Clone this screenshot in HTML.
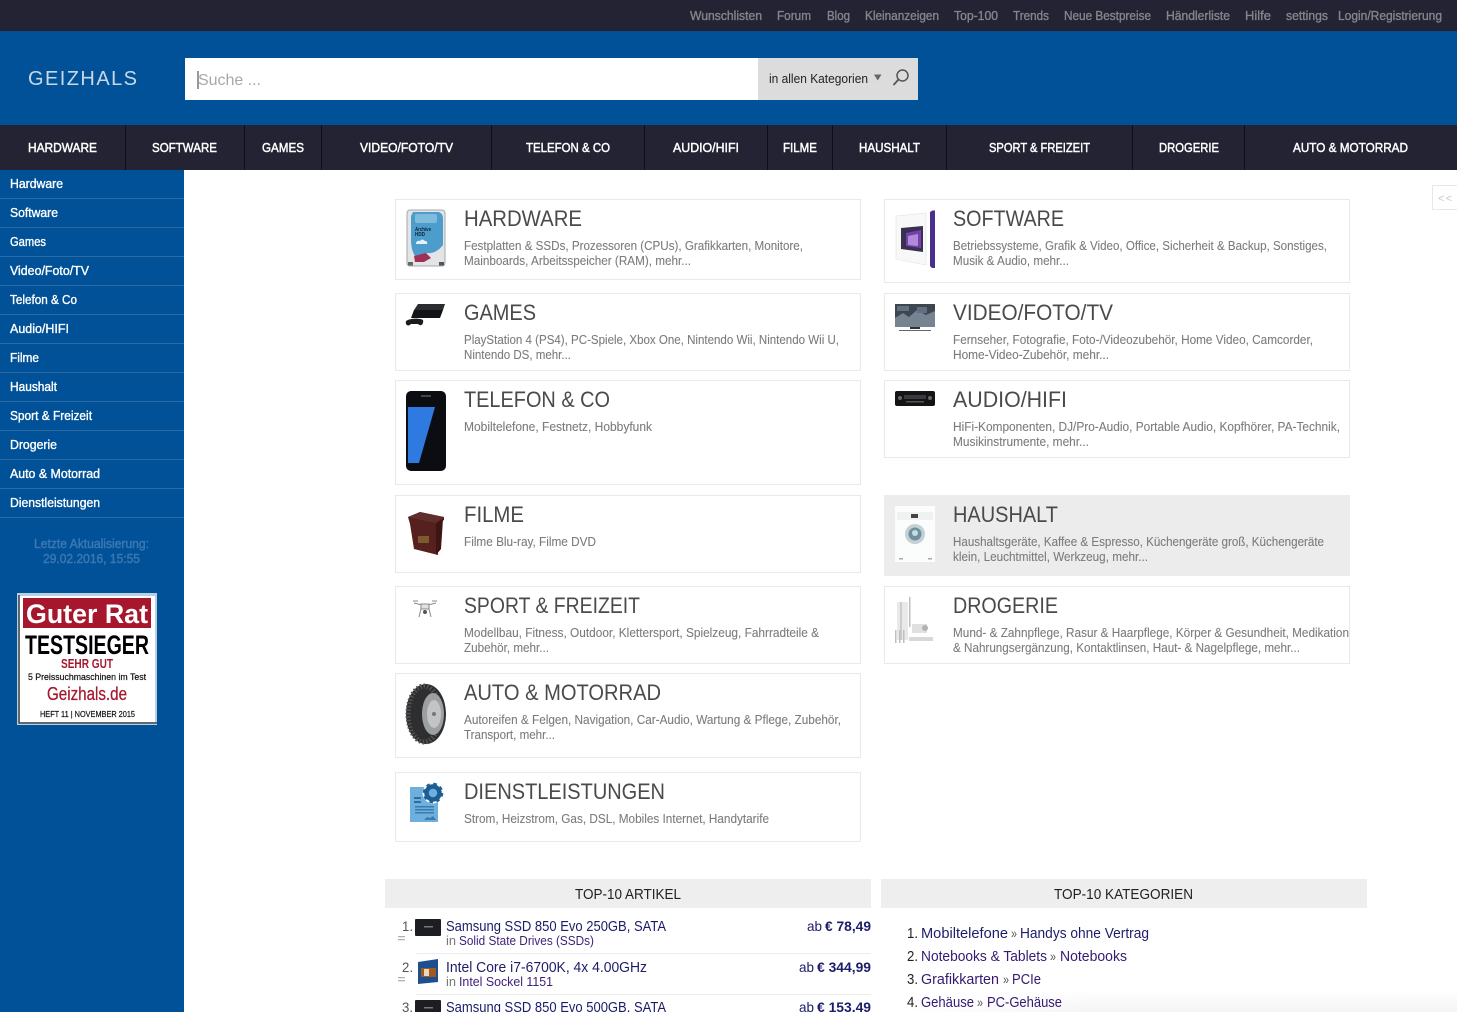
<!DOCTYPE html>
<html lang="de"><head><meta charset="utf-8"><title>Geizhals</title>
<style>
html,body{margin:0;padding:0;background:#fff;width:1457px;height:1012px;overflow:hidden;font-family:"Liberation Sans",sans-serif}
.b{position:absolute;box-sizing:border-box}
.c{border:1px solid #e9e9e9;background:#fff}
svg{position:absolute;left:0;top:0}
text{font-family:"Liberation Sans",sans-serif}
.top{font-size:12.5px;fill:#85858d;stroke:#85858d;stroke-width:.35}
.nav{font-size:13px;fill:#fff;stroke:#fff;stroke-width:.45}
.sd{font-size:12.5px;fill:#fff;stroke:#fff;stroke-width:.35}
.t{font-size:22px;fill:#4a4a4a}
.d{font-size:12.5px;fill:#7c7c7c;stroke:#7c7c7c;stroke-width:.1}
.l{font-size:14.5px;fill:#1c1c6b}
.s{font-size:12.5px;fill:#3d1f7a}
.g{font-size:12.5px;fill:#777}
.p{font-size:14px;fill:#1c1c6b}
.pb{font-size:14px;font-weight:bold;fill:#1c1c6b}
.n{font-size:14px;fill:#555}
.n2{font-size:14.5px;fill:#222}
.h{font-size:14.5px;fill:#222}
</style></head><body>
<div class="b" style="left:0;top:0;width:1457px;height:31px;background:#232333"></div>
<div class="b" style="left:0;top:31px;width:1457px;height:94px;background:#005197"></div>
<div class="b" style="left:0;top:125px;width:1457px;height:45px;background:#232333"></div>
<div class="b" style="left:0;top:170px;width:184px;height:842px;background:#005197"></div>
<div class="b" style="left:185px;top:58px;width:573px;height:42px;background:#fff"></div>
<div class="b" style="left:758px;top:58px;width:160px;height:42px;background:#dcdcdc"></div>

<div class="b c" style="left:395px;top:199px;width:466px;height:81px"></div>
<div class="b c" style="left:395px;top:293px;width:466px;height:78px"></div>
<div class="b c" style="left:395px;top:380px;width:466px;height:105px"></div>
<div class="b c" style="left:395px;top:495px;width:466px;height:78px"></div>
<div class="b c" style="left:395px;top:586px;width:466px;height:78px"></div>
<div class="b c" style="left:395px;top:673px;width:466px;height:85px"></div>
<div class="b c" style="left:395px;top:772px;width:466px;height:70px"></div>
<div class="b c" style="left:884px;top:199px;width:466px;height:84px"></div>
<div class="b c" style="left:884px;top:293px;width:466px;height:78px"></div>
<div class="b c" style="left:884px;top:380px;width:466px;height:78px"></div>
<div class="b" style="left:884px;top:495px;width:466px;height:81px;background:#ececec"></div>
<div class="b c" style="left:884px;top:586px;width:466px;height:78px"></div>

<div class="b" style="left:385px;top:879px;width:486px;height:29px;background:#eee"></div>
<div class="b" style="left:881px;top:879px;width:486px;height:29px;background:#eee"></div>
<div class="b" style="left:1432px;top:185px;width:25px;height:25px;border:1px solid #e8e8e8;border-right:0;background:#fff"></div>
<div class="b" style="left:900px;top:990px;width:557px;height:22px;background:linear-gradient(to bottom,rgba(243,243,243,0),rgba(243,243,243,.9));-webkit-mask-image:linear-gradient(to right,transparent,#000 35%);mask-image:linear-gradient(to right,transparent,#000 35%)"></div>

<svg width="1457" height="1012" viewBox="0 0 1457 1012" xmlns="http://www.w3.org/2000/svg">
<!-- top links -->
<g class="top">
<text x="690" y="20" textLength="72" lengthAdjust="spacingAndGlyphs">Wunschlisten</text>
<text x="777" y="20" textLength="34" lengthAdjust="spacingAndGlyphs">Forum</text>
<text x="827" y="20" textLength="23" lengthAdjust="spacingAndGlyphs">Blog</text>
<text x="865" y="20" textLength="74" lengthAdjust="spacingAndGlyphs">Kleinanzeigen</text>
<text x="954" y="20" textLength="44" lengthAdjust="spacingAndGlyphs">Top-100</text>
<text x="1013" y="20" textLength="36" lengthAdjust="spacingAndGlyphs">Trends</text>
<text x="1064" y="20" textLength="87" lengthAdjust="spacingAndGlyphs">Neue Bestpreise</text>
<text x="1166" y="20" textLength="64" lengthAdjust="spacingAndGlyphs">Händlerliste</text>
<text x="1245" y="20" textLength="26" lengthAdjust="spacingAndGlyphs">Hilfe</text>
<text x="1286" y="20" textLength="42" lengthAdjust="spacingAndGlyphs">settings</text>
<text x="1338" y="20" textLength="104" lengthAdjust="spacingAndGlyphs">Login/Registrierung</text>
</g>
<!-- logo & search -->
<text x="28" y="85" font-size="20" fill="#c9d8e7" textLength="109" lengthAdjust="spacing">GEIZHALS</text>
<text x="198" y="85" font-size="16" fill="#a8a8a8" textLength="63" lengthAdjust="spacing">Suche ...</text>
<rect x="197.500" y="71" width="1" height="18" fill="#333"/>
<text x="769" y="83" font-size="12.500" fill="#222" textLength="99" lengthAdjust="spacingAndGlyphs">in allen Kategorien</text>
<path d="M874 74.500h7.500l-3.750 6z" fill="#666"/>
<circle cx="902.500" cy="75.500" r="5.500" fill="none" stroke="#555" stroke-width="1.500"/>
<path d="M898.500 79.500L893.500 85" stroke="#555" stroke-width="1.800" fill="none"/>
<!-- nav -->
<g fill="#0e0e18">
<rect x="125" y="125" width="1" height="45"/><rect x="244" y="125" width="1" height="45"/><rect x="321" y="125" width="1" height="45"/><rect x="491" y="125" width="1" height="45"/><rect x="644" y="125" width="1" height="45"/><rect x="767" y="125" width="1" height="45"/><rect x="832" y="125" width="1" height="45"/><rect x="946" y="125" width="1" height="45"/><rect x="1132" y="125" width="1" height="45"/><rect x="1244" y="125" width="1" height="45"/>
</g>
<g class="nav">
<text x="28" y="152" textLength="69" lengthAdjust="spacingAndGlyphs">HARDWARE</text>
<text x="152" y="152" textLength="65" lengthAdjust="spacingAndGlyphs">SOFTWARE</text>
<text x="262" y="152" textLength="42" lengthAdjust="spacingAndGlyphs">GAMES</text>
<text x="360" y="152" textLength="93" lengthAdjust="spacingAndGlyphs">VIDEO/FOTO/TV</text>
<text x="526" y="152" textLength="84" lengthAdjust="spacingAndGlyphs">TELEFON &amp; CO</text>
<text x="673" y="152" textLength="66" lengthAdjust="spacingAndGlyphs">AUDIO/HIFI</text>
<text x="783" y="152" textLength="34" lengthAdjust="spacingAndGlyphs">FILME</text>
<text x="859" y="152" textLength="61" lengthAdjust="spacingAndGlyphs">HAUSHALT</text>
<text x="989" y="152" textLength="101" lengthAdjust="spacingAndGlyphs">SPORT &amp; FREIZEIT</text>
<text x="1159" y="152" textLength="60" lengthAdjust="spacingAndGlyphs">DROGERIE</text>
<text x="1293" y="152" textLength="115" lengthAdjust="spacingAndGlyphs">AUTO &amp; MOTORRAD</text>
</g>
<!-- sidebar -->
<g fill="#2a6ba6">
<rect y="198" width="184" height="1"/><rect y="227" width="184" height="1"/><rect y="256" width="184" height="1"/><rect y="285" width="184" height="1"/><rect y="314" width="184" height="1"/><rect y="343" width="184" height="1"/><rect y="372" width="184" height="1"/><rect y="401" width="184" height="1"/><rect y="430" width="184" height="1"/><rect y="459" width="184" height="1"/><rect y="488" width="184" height="1"/><rect y="517" width="184" height="1"/>
</g>
<g class="sd">
<text x="10" y="188" textLength="53" lengthAdjust="spacingAndGlyphs">Hardware</text>
<text x="10" y="217" textLength="48" lengthAdjust="spacingAndGlyphs">Software</text>
<text x="10" y="246" textLength="36" lengthAdjust="spacingAndGlyphs">Games</text>
<text x="10" y="275" textLength="79" lengthAdjust="spacingAndGlyphs">Video/Foto/TV</text>
<text x="10" y="304" textLength="67" lengthAdjust="spacingAndGlyphs">Telefon &amp; Co</text>
<text x="10" y="333" textLength="59" lengthAdjust="spacingAndGlyphs">Audio/HIFI</text>
<text x="10" y="362" textLength="29" lengthAdjust="spacingAndGlyphs">Filme</text>
<text x="10" y="391" textLength="47" lengthAdjust="spacingAndGlyphs">Haushalt</text>
<text x="10" y="420" textLength="82" lengthAdjust="spacingAndGlyphs">Sport &amp; Freizeit</text>
<text x="10" y="449" textLength="47" lengthAdjust="spacingAndGlyphs">Drogerie</text>
<text x="10" y="478" textLength="90" lengthAdjust="spacingAndGlyphs">Auto &amp; Motorrad</text>
<text x="10" y="507" textLength="90" lengthAdjust="spacingAndGlyphs">Dienstleistungen</text>
</g>
<g font-size="12.500" fill="#3a78b2" stroke="#3a78b2" stroke-width=".45">
<text x="34" y="548" textLength="115" lengthAdjust="spacingAndGlyphs">Letzte Aktualisierung:</text>
<text x="43" y="563" textLength="97" lengthAdjust="spacingAndGlyphs">29.02.2016, 15:55</text>
</g>
<!-- badge -->
<rect x="17" y="593" width="140" height="132" fill="#b9d0e0"/>
<path d="M19 595V723H157" fill="none" stroke="#444" stroke-width="1.500"/>
<rect x="20" y="596" width="135" height="126" fill="#fff"/>
<rect x="23" y="598" width="128" height="30" fill="#a6172d"/>
<text x="26" y="623" font-size="27" font-weight="bold" fill="#fff" textLength="122" lengthAdjust="spacingAndGlyphs">Guter Rat</text>
<text x="25" y="654" font-size="27" font-weight="bold" fill="#000" textLength="124" lengthAdjust="spacingAndGlyphs">TESTSIEGER</text>
<text x="61" y="668" font-size="13" font-weight="bold" fill="#a6172d" textLength="52" lengthAdjust="spacingAndGlyphs">SEHR GUT</text>
<text x="28" y="680" font-size="9" fill="#111" stroke="#111" stroke-width=".2" textLength="118" lengthAdjust="spacingAndGlyphs">5 Preissuchmaschinen im Test</text>
<text x="47" y="700" font-size="18" fill="#a6172d" stroke="#a6172d" stroke-width=".25" textLength="80" lengthAdjust="spacingAndGlyphs">Geizhals.de</text>
<text x="40" y="717" font-size="8.500" fill="#111" stroke="#111" stroke-width=".2" textLength="95" lengthAdjust="spacingAndGlyphs">HEFT 11 | NOVEMBER 2015</text>

<!-- card text left -->
<text class="t" x="464" y="226" textLength="118" lengthAdjust="spacingAndGlyphs">HARDWARE</text>
<text class="d" x="464" y="250" textLength="339" lengthAdjust="spacingAndGlyphs">Festplatten &amp; SSDs, Prozessoren (CPUs), Grafikkarten, Monitore,</text>
<text class="d" x="464" y="265" textLength="227" lengthAdjust="spacingAndGlyphs">Mainboards, Arbeitsspeicher (RAM), mehr...</text>
<text class="t" x="464" y="320" textLength="72" lengthAdjust="spacingAndGlyphs">GAMES</text>
<text class="d" x="464" y="344" textLength="375" lengthAdjust="spacingAndGlyphs">PlayStation 4 (PS4), PC-Spiele, Xbox One, Nintendo Wii, Nintendo Wii U,</text>
<text class="d" x="464" y="359" textLength="107" lengthAdjust="spacingAndGlyphs">Nintendo DS, mehr...</text>
<text class="t" x="464" y="407" textLength="146" lengthAdjust="spacingAndGlyphs">TELEFON &amp; CO</text>
<text class="d" x="464" y="431" textLength="188" lengthAdjust="spacingAndGlyphs">Mobiltelefone, Festnetz, Hobbyfunk</text>
<text class="t" x="464" y="522" textLength="60" lengthAdjust="spacingAndGlyphs">FILME</text>
<text class="d" x="464" y="546" textLength="132" lengthAdjust="spacingAndGlyphs">Filme Blu-ray, Filme DVD</text>
<text class="t" x="464" y="613" textLength="176" lengthAdjust="spacingAndGlyphs">SPORT &amp; FREIZEIT</text>
<text class="d" x="464" y="637" textLength="355" lengthAdjust="spacingAndGlyphs">Modellbau, Fitness, Outdoor, Klettersport, Spielzeug, Fahrradteile &amp;</text>
<text class="d" x="464" y="652" textLength="85" lengthAdjust="spacingAndGlyphs">Zubehör, mehr...</text>
<text class="t" x="464" y="700" textLength="197" lengthAdjust="spacingAndGlyphs">AUTO &amp; MOTORRAD</text>
<text class="d" x="464" y="724" textLength="377" lengthAdjust="spacingAndGlyphs">Autoreifen &amp; Felgen, Navigation, Car-Audio, Wartung &amp; Pflege, Zubehör,</text>
<text class="d" x="464" y="739" textLength="91" lengthAdjust="spacingAndGlyphs">Transport, mehr...</text>
<text class="t" x="464" y="799" textLength="201" lengthAdjust="spacingAndGlyphs">DIENSTLEISTUNGEN</text>
<text class="d" x="464" y="823" textLength="305" lengthAdjust="spacingAndGlyphs">Strom, Heizstrom, Gas, DSL, Mobiles Internet, Handytarife</text>
<!-- card text right -->
<text class="t" x="953" y="226" textLength="111" lengthAdjust="spacingAndGlyphs">SOFTWARE</text>
<text class="d" x="953" y="250" textLength="374" lengthAdjust="spacingAndGlyphs">Betriebssysteme, Grafik &amp; Video, Office, Sicherheit &amp; Backup, Sonstiges,</text>
<text class="d" x="953" y="265" textLength="116" lengthAdjust="spacingAndGlyphs">Musik &amp; Audio, mehr...</text>
<text class="t" x="953" y="320" textLength="160" lengthAdjust="spacingAndGlyphs">VIDEO/FOTO/TV</text>
<text class="d" x="953" y="344" textLength="360" lengthAdjust="spacingAndGlyphs">Fernseher, Fotografie, Foto-/Videozubehör, Home Video, Camcorder,</text>
<text class="d" x="953" y="359" textLength="156" lengthAdjust="spacingAndGlyphs">Home-Video-Zubehör, mehr...</text>
<text class="t" x="953" y="407" textLength="114" lengthAdjust="spacingAndGlyphs">AUDIO/HIFI</text>
<text class="d" x="953" y="431" textLength="387" lengthAdjust="spacingAndGlyphs">HiFi-Komponenten, DJ/Pro-Audio, Portable Audio, Kopfhörer, PA-Technik,</text>
<text class="d" x="953" y="446" textLength="136" lengthAdjust="spacingAndGlyphs">Musikinstrumente, mehr...</text>
<text class="t" x="953" y="522" textLength="105" lengthAdjust="spacingAndGlyphs">HAUSHALT</text>
<text class="d" x="953" y="546" textLength="371" lengthAdjust="spacingAndGlyphs">Haushaltsgeräte, Kaffee &amp; Espresso, Küchengeräte groß, Küchengeräte</text>
<text class="d" x="953" y="561" textLength="195" lengthAdjust="spacingAndGlyphs">klein, Leuchtmittel, Werkzeug, mehr...</text>
<text class="t" x="953" y="613" textLength="105" lengthAdjust="spacingAndGlyphs">DROGERIE</text>
<text class="d" x="953" y="637" textLength="396" lengthAdjust="spacingAndGlyphs">Mund- &amp; Zahnpflege, Rasur &amp; Haarpflege, Körper &amp; Gesundheit, Medikation</text>
<text class="d" x="953" y="652" textLength="347" lengthAdjust="spacingAndGlyphs">&amp; Nahrungsergänzung, Kontaktlinsen, Haut- &amp; Nagelpflege, mehr...</text>

<!-- collapse -->
<text x="1438" y="202" font-size="11" fill="#c8c8c8" textLength="14" lengthAdjust="spacing">&lt;&lt;</text>

<!-- HDD icon -->
<rect x="407" y="210" width="38" height="56" rx="3" fill="#e2e4e5" stroke="#a4a8ab" stroke-width="1"/>
<path d="M413 212H439Q443 214 443 218V245Q436 254 427 253L415 256Q411 250 411 240V216Z" fill="#4c9ccc"/>
<rect x="415" y="214" width="22" height="9" rx="2" fill="#7fbbdd"/>
<text x="415" y="231" font-size="5" font-weight="bold" fill="#123" textLength="16" lengthAdjust="spacingAndGlyphs">Archive</text>
<text x="415" y="236" font-size="5" font-weight="bold" fill="#123" textLength="10" lengthAdjust="spacingAndGlyphs">HDD</text>
<path d="M416 243q1-3 4-2q2-3 5 0q3 0 2 3h-11z" fill="#e6f2fa"/>
<path d="M414 256L426 253 431 258 424 262H415z" fill="#9e3058"/>
<rect x="408" y="262" width="5" height="3.500" fill="#666"/><rect x="439" y="262" width="5" height="3.500" fill="#555"/>
<!-- Win box -->
<path d="M896 216L926 213V265L896 259z" fill="#f8f8f9" stroke="#e2e2e2" stroke-width=".6"/>
<path d="M930 212L932.500 210.500H935V268H932L930 266z" fill="#4a2f8f"/>
<path d="M901 228L923 226V252L901 249z" fill="#38324f"/>
<path d="M906 233L921 230V248L906 246z" fill="#7a3eb3"/>
<path d="M908 236L918 234V246L908 245z" fill="#b18ad8"/>
<!-- PS4 -->
<path d="M418 304H445L443 310H414z" fill="#2a2c30"/>
<path d="M414 310H443L440 318H411z" fill="#121316"/>
<path d="M406 321C410 318 420 318 423 320C424 324 421 327 418 324H411C408 327 405 325 406 321z" fill="#1a1c1f"/>
<!-- Phone -->
<rect x="406" y="391" width="40" height="80" rx="5" fill="#0b0d12"/>
<path d="M408 407H435L419 463H408z" fill="#2f7ae0"/>
<rect x="421" y="395" width="10" height="2" fill="#444"/>
<!-- TV -->
<rect x="895" y="304" width="40" height="23" fill="#3e4650"/>
<path d="M895 318l8-5 6 4 8-7 9 5 9-4v16h-40z" fill="#768390"/>
<path d="M897 306h12v5h-12zM917 307h10v6h-10z" fill="#5f7182"/>
<path d="M910 327h10v2h-10zM899 330h32v.8h-32z" fill="#333"/>
<!-- Receiver -->
<rect x="895" y="391" width="40" height="15" rx="2" fill="#141416"/>
<rect x="904" y="395" width="22" height="4" fill="#3a3a3e"/>
<circle cx="900" cy="398" r="2" fill="#666"/><circle cx="930" cy="398" r="2" fill="#666"/>
<rect x="906" y="401" width="18" height="1.500" fill="#555"/>
<!-- Film box -->
<path d="M408 517L420 512 444 517V520L438 524V555L414 549L410 524z" fill="#55201d"/>
<path d="M408 517L420 512 444 517 436 523z" fill="#5f302b"/>
<path d="M436 523V555L441 549 443 519z" fill="#3d1512"/>
<path d="M418 536h11v7h-11z" fill="#8f7238" opacity=".7"/>
<!-- Drone -->
<g stroke="#8a8a8a" stroke-width="1" fill="none">
<path d="M414 603L422 605M436 603L428 605"/>
<path d="M413 601h5M432 601h5"/>
<rect x="421" y="604" width="8" height="5" fill="#e2e2e2"/>
<path d="M421 609L419 617M429 609L431 617"/>
</g>
<circle cx="425" cy="612" r="2" fill="#555"/>
<!-- Tire -->
<ellipse cx="426" cy="714" rx="20" ry="30" fill="#2e2e30"/>
<ellipse cx="424" cy="714" rx="16" ry="28" fill="none" stroke="#545456" stroke-width="5" stroke-dasharray="1.500 2"/>
<ellipse cx="433" cy="714" rx="11" ry="21" fill="#9da0a2"/>
<ellipse cx="434" cy="714" rx="7" ry="14" fill="#c2c4c5"/>
<circle cx="434" cy="714" r="2" fill="#777"/>
<!-- Dienst -->
<rect x="410" y="787" width="28" height="35" fill="#6db0de"/>
<rect x="414" y="797" width="7" height="2" fill="#2f6d9f"/><rect x="414" y="801" width="7" height="2" fill="#2f6d9f"/>
<rect x="415" y="806" width="19" height="1.500" fill="#3b7cad"/><rect x="415" y="809" width="19" height="1.500" fill="#3b7cad"/><rect x="415" y="812" width="19" height="1.500" fill="#3b7cad"/>
<path d="M424 820l3-3 3 1 3-2 3 4z" fill="#3b7cad"/>
<circle cx="433" cy="793" r="9" fill="none" stroke="#fff" stroke-width="3"/>
<circle cx="433" cy="793" r="6.500" fill="none" stroke="#1c5d94" stroke-width="4.500"/>
<circle cx="433" cy="793" r="9" fill="none" stroke="#1c5d94" stroke-width="2.500" stroke-dasharray="3.500 3.570"/>
<!-- Washer -->
<rect x="895" y="506" width="40" height="56" fill="#fbfdfd"/>
<rect x="897" y="512" width="36" height="8" fill="#f0f2f2"/>
<rect x="911" y="514" width="7" height="4" fill="#444"/>
<circle cx="915" cy="534" r="10" fill="#c5d1d5"/>
<circle cx="915" cy="534" r="6.500" fill="#6f919e"/>
<circle cx="915" cy="533" r="3" fill="#c8dbe2"/>
<rect x="899" y="558" width="4" height="1.500" fill="#aaa"/><rect x="928" y="558" width="4" height="1.500" fill="#aaa"/>
<!-- Drogerie -->
<g opacity=".75">
<rect x="897" y="602" width="11" height="38" fill="#e2e2e2"/>
<rect x="900" y="602" width="2" height="38" fill="#bcbcbc"/>
<rect x="909" y="597" width="1.500" height="30" fill="#aaa"/>
<rect x="912" y="624" width="15" height="9" fill="#d6d6d6"/>
<circle cx="925" cy="628" r="3" fill="#999"/>
<rect x="909" y="637" width="24" height="4" fill="#cbcbcb"/>
<rect x="895" y="630" width="1.500" height="13" fill="#aaa"/><rect x="899" y="630" width="1.500" height="13" fill="#aaa"/><rect x="903" y="630" width="1.500" height="13" fill="#aaa"/>
</g>

<!-- bottom headers -->
<text class="h" x="575" y="899" textLength="106" lengthAdjust="spacingAndGlyphs">TOP-10 ARTIKEL</text>
<text class="h" x="1054" y="899" textLength="139" lengthAdjust="spacingAndGlyphs">TOP-10 KATEGORIEN</text>
<!-- top articles -->
<text class="n" x="402" y="931" textLength="11" lengthAdjust="spacingAndGlyphs">1.</text>
<rect x="415" y="919" width="26" height="17" rx="1" fill="#1d1e21"/><rect x="424" y="926" width="9" height="1.500" fill="#777"/>
<path d="M398 936h7v1.300h-7zM398 939h7v1.300h-7z" fill="#b0b0b0"/>
<text class="l" x="446" y="931" textLength="220" lengthAdjust="spacingAndGlyphs">Samsung SSD 850 Evo 250GB, SATA</text>
<text class="g" x="446" y="945" textLength="10" lengthAdjust="spacingAndGlyphs">in</text>
<text class="s" x="459" y="945" textLength="135" lengthAdjust="spacingAndGlyphs">Solid State Drives (SSDs)</text>
<text class="p" x="807" y="931" textLength="15" lengthAdjust="spacingAndGlyphs">ab</text>
<text class="pb" x="825" y="931" textLength="46" lengthAdjust="spacingAndGlyphs">€ 78,49</text>
<rect x="416" y="953" width="455" height="1" fill="#ececec"/>
<text class="n" x="402" y="972" textLength="11" lengthAdjust="spacingAndGlyphs">2.</text>
<path d="M418 962L438 959V982L418 984z" fill="#1b4f8f"/>
<path d="M421 968h15v9h-15z" fill="#a3591f"/><path d="M424 969h5v7h-5z" fill="#e8d8c0"/>
<path d="M398 977h7v1.300h-7zM398 980h7v1.300h-7z" fill="#b0b0b0"/>
<text class="l" x="446" y="972" textLength="201" lengthAdjust="spacingAndGlyphs">Intel Core i7-6700K, 4x 4.00GHz</text>
<text class="g" x="446" y="986" textLength="10" lengthAdjust="spacingAndGlyphs">in</text>
<text class="s" x="459" y="986" textLength="94" lengthAdjust="spacingAndGlyphs">Intel Sockel 1151</text>
<text class="p" x="799" y="972" textLength="15" lengthAdjust="spacingAndGlyphs">ab</text>
<text class="pb" x="817" y="972" textLength="54" lengthAdjust="spacingAndGlyphs">€ 344,99</text>
<rect x="416" y="994" width="455" height="1" fill="#ececec"/>
<text class="n" x="402" y="1012" textLength="11" lengthAdjust="spacingAndGlyphs">3.</text>
<rect x="415" y="1000" width="26" height="17" rx="1" fill="#1d1e21"/><rect x="424" y="1007" width="9" height="1.500" fill="#777"/>
<text class="l" x="446" y="1012" textLength="220" lengthAdjust="spacingAndGlyphs">Samsung SSD 850 Evo 500GB, SATA</text>
<text class="p" x="799" y="1012" textLength="15" lengthAdjust="spacingAndGlyphs">ab</text>
<text class="pb" x="817" y="1012" textLength="54" lengthAdjust="spacingAndGlyphs">€ 153,49</text>
<!-- top categories -->
<text class="n2" x="907" y="938" textLength="11" lengthAdjust="spacingAndGlyphs">1.</text>
<text class="l" x="921" y="938" textLength="87" lengthAdjust="spacingAndGlyphs">Mobiltelefone</text>
<text class="n" x="1011" y="938" textLength="6" lengthAdjust="spacingAndGlyphs">»</text>
<text class="l" x="1020" y="938" textLength="129" lengthAdjust="spacingAndGlyphs">Handys ohne Vertrag</text>
<text class="n2" x="907" y="961" textLength="11" lengthAdjust="spacingAndGlyphs">2.</text>
<text class="l" x="921" y="961" textLength="126" lengthAdjust="spacingAndGlyphs" style="fill:#351a70">Notebooks &amp; Tablets</text>
<text class="n" x="1050" y="961" textLength="6" lengthAdjust="spacingAndGlyphs">»</text>
<text class="l" x="1060" y="961" textLength="67" lengthAdjust="spacingAndGlyphs" style="fill:#351a70">Notebooks</text>
<text class="n2" x="907" y="984" textLength="11" lengthAdjust="spacingAndGlyphs">3.</text>
<text class="l" x="921" y="984" textLength="78" lengthAdjust="spacingAndGlyphs" style="fill:#351a70">Grafikkarten</text>
<text class="n" x="1003" y="984" textLength="6" lengthAdjust="spacingAndGlyphs">»</text>
<text class="l" x="1012" y="984" textLength="29" lengthAdjust="spacingAndGlyphs" style="fill:#351a70">PCIe</text>
<text class="n2" x="907" y="1007" textLength="11" lengthAdjust="spacingAndGlyphs">4.</text>
<text class="l" x="921" y="1007" textLength="53" lengthAdjust="spacingAndGlyphs" style="fill:#351a70">Gehäuse</text>
<text class="n" x="977" y="1007" textLength="6" lengthAdjust="spacingAndGlyphs">»</text>
<text class="l" x="987" y="1007" textLength="75" lengthAdjust="spacingAndGlyphs" style="fill:#351a70">PC-Gehäuse</text>
</svg>
</body></html>
